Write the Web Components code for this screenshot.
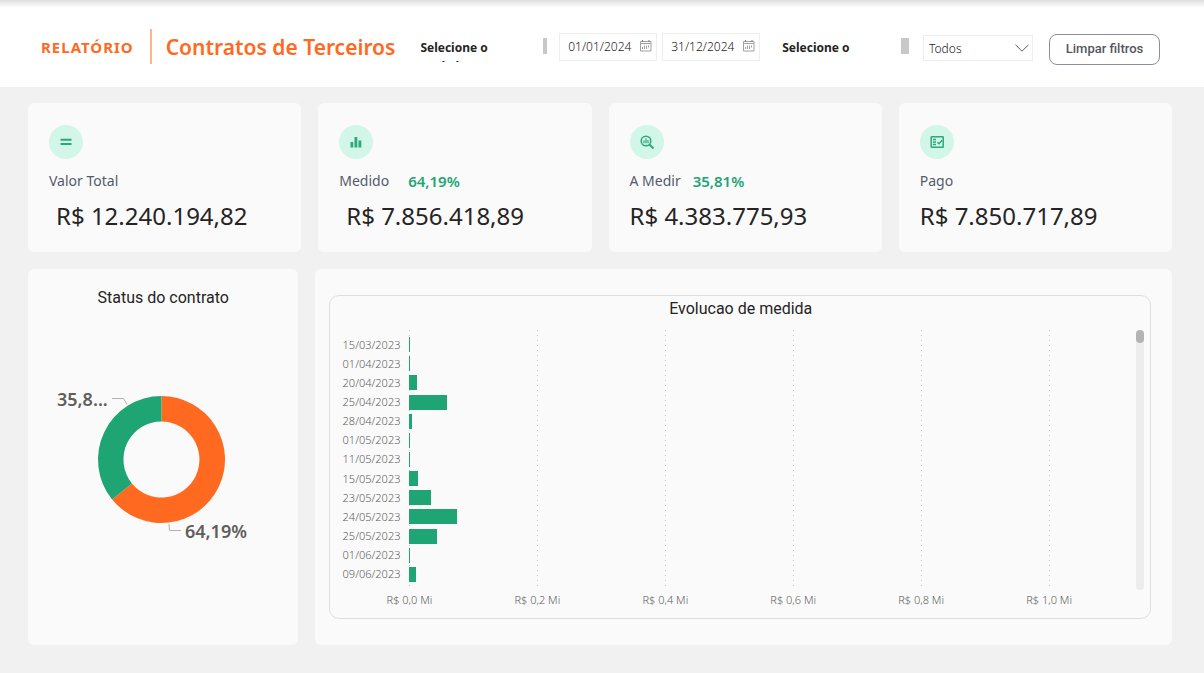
<!DOCTYPE html>
<html lang="pt-BR">
<head>
<meta charset="utf-8">
<title>Contratos de Terceiros</title>
<style>
  body { margin: 0; background: #f1f1f1; color: #252423; font-family: "Noto Sans", "Open Sans", sans-serif; }
</style>
</head>
<body>
<report-page>
  <report-header slot="header"></report-header>
  <kpi-card slot="kpi" icon="equal" label="Valor Total" roomy>R$ 12.240.194,82</kpi-card>
  <kpi-card slot="kpi" icon="bars" label="Medido" share="64,19%" roomy>R$ 7.856.418,89</kpi-card>
  <kpi-card slot="kpi" icon="inspect" label="A Medir" share="35,81%">R$ 4.383.775,93</kpi-card>
  <kpi-card slot="kpi" icon="check" label="Pago">R$ 7.850.717,89</kpi-card>
  <status-donut slot="chart">Status do contrato</status-donut>
  <measure-chart slot="chart">Evolucao de medida</measure-chart>
</report-page>

<script>
const define = (name, html, setup) => customElements.define(name, class extends HTMLElement {
  constructor() {
    super();
    const t = document.createElement('template');
    t.innerHTML = html;
    this.attachShadow({ mode: 'open' }).append(t.content.cloneNode(true));
  }
  connectedCallback() { if (setup) setup(this, this.shadowRoot); }
});

define('report-page', `
<style>
  :host { display: block; min-height: 100vh; }
  main { padding: 16px 32px 28px 28px; display: grid; gap: 17px; }
  .kpis { display: grid; grid-template-columns: repeat(4, 1fr); gap: 17px; }
  .charts { display: grid; grid-template-columns: 6fr 19fr; gap: 17px; }
</style>
<slot name="header"></slot>
<main>
  <section class="kpis"><slot name="kpi"></slot></section>
  <section class="charts"><slot name="chart"></slot></section>
</main>`);

define('scroll-label', `
<style>
  :host { display: flex; justify-content: space-between; flex: 1; height: 24px; overflow: hidden;
    font-size: 12px; line-height: 19px; font-weight: 700; }
  .text { width: 80px; }
  .thumb { width: var(--thumb, 4px); height: 16px; background: #c8c8c8; }
</style>
<span class="text"><slot></slot></span><span class="thumb"></span>`);

define('report-header', `
<style>
  :host { display: flex; align-items: center; height: 87px; padding: 0 44px 0 41px; box-sizing: border-box;
    background: linear-gradient(#dedede, #fff 8px); }
  .brand { font-size: 15px; line-height: 20px; font-weight: 700; color: #ff6a20; letter-spacing: 1px; padding-top: 6px; }
  .rule { width: 2px; height: 35px; margin: 6px 14px 0 16px; background: #ffb58f; }
  h1 { margin: 0; font-size: 21px; line-height: 30px; font-weight: 600; color: #ff6a20; white-space: nowrap; padding-top: 6px; }
  form { flex: 1; display: flex; align-items: center; margin-left: 25px; }
  label { flex: 1; display: flex; margin-top: 12px; }
  .second { --thumb: 8px; margin-left: 22px; }
  .date { display: flex; align-items: center; width: 98px; height: 28px; box-sizing: border-box; border: 1px solid #eee; margin-top: 6px; }
  .date + .date { margin-left: 5px; }
  .first + .date { margin-left: 12px; }
  .date svg { margin: 0 4px 2px 0; flex: none; }
  input { flex: 1; min-width: 0; border: 0; padding: 0 0 0 8px; background: none; font: 300 12px/18px "Noto Sans", sans-serif; color: #252423; outline: 0; }
  .pick { display: grid; width: 110px; height: 26px; margin: 9px 16px 0 14px; }
  .pick > * { grid-area: 1 / 1; }
  select { appearance: none; border: 1px solid #eee; border-radius: 0; background: #fff; padding: 2px 0 0 5px;
    font: 300 12px/18px "Noto Sans", sans-serif; color: #252423; }
  .pick svg { justify-self: end; align-self: center; margin-right: 4px; pointer-events: none; }
  button { width: 111px; height: 31px; margin-top: 11px; padding: 0; border: 1px solid #8d8f96; border-radius: 8px; background: #fff;
    font: 500 13px/18px Roboto, sans-serif; color: #54565f; }
</style>
<span class="brand">RELATÓRIO</span><span class="rule"></span>
<h1>Contratos de Terceiros</h1>
<form>
  <label class="first" for="from"><scroll-label>Selecione o período</scroll-label></label>
  <span class="date"><input id="from" value="01/01/2024"><svg class="cal" width="12" height="12"></svg></span>
  <span class="date"><input id="to" aria-label="Data final" value="31/12/2024"><svg class="cal" width="12" height="12"></svg></span>
  <label class="second" for="pick"><scroll-label>Selecione o</scroll-label></label>
  <span class="pick"><select id="pick"><option>Todos</option></select>
    <svg width="14" height="8" viewBox="0 0 14 8" fill="none" stroke="#605e5c"><path d="M.5 .8 7 7.2 13.5 .8"/></svg></span>
  <button type="button">Limpar filtros</button>
</form>`, (host, root) => {
  for (const svg of root.querySelectorAll('.cal'))
    svg.innerHTML = '<path d="M.5 1.5h10.500v9.500H.5z" fill="none" stroke="#a3a19f"/><path d="M.5 3.500h10.500" stroke="#a3a19f"/><path d="M2.500 0v2M9 0v2" stroke="#777"/><path d="M2.500 7v2M4.500 5.500v3.500M6.500 5.500v3.500M8.500 5.500v2" stroke="#a3a19f"/>';
});

const icons = {
  equal: '<path d="M6.500 9.800h11M6.500 14h11" fill="none" stroke="#2ba97b" stroke-width="2"/>',
  bars: '<path d="M6.500 12h2.800v5.500H6.500zM10.500 7h2.800v10.500h-2.800zM14.500 10.500h2.800v7h-2.800z" fill="#2ba97b"/>',
  inspect: '<g fill="none" stroke="#2ba97b" stroke-width="1.500"><circle cx="11" cy="11" r="4.800"/><path d="M14.500 14.500 18.500 18.500" stroke-width="2"/><path d="M9 10.500v2.800M11 8.500v4.800M13 10v3.300" stroke-width="1.200"/></g>',
  check: '<g fill="none" stroke="#2ba97b" stroke-width="1.500"><rect x="6.200" y="6.700" width="12" height="10.600" rx=".6"/><path d="M8 9.500h3M8 12h3M8 14.500h3M12.500 12.200l1.500 1.500 3.200-3.400"/></g>'
};

define('kpi-card', `
<style>
  :host { display: block; height: 149px; padding: 22px 21px 0; box-sizing: border-box; border-radius: 6px; background: #fafafa; }
  .disc { display: grid; place-items: center; width: 34px; height: 34px; border-radius: 50%; background: #d2f6e7; }
  .line { display: flex; gap: 12px; margin-top: 12px; font-size: 14px; line-height: 20px; }
  .name { color: #545a6b; }
  .share { font-size: 15px; font-weight: 600; color: #1fa573; }
  .value { margin-top: 9px; font-size: 24px; line-height: 32px; white-space: nowrap; }
  :host([roomy]) .line { gap: 19px; }
  :host([roomy]) .value { padding-left: 7px; }
</style>
<div class="disc"><svg width="24" height="24" viewBox="0 0 24 24"></svg></div>
<div class="line"><span class="name"></span><span class="share"></span></div>
<div class="value"><slot></slot></div>`, (host, root) => {
  root.querySelector('svg').innerHTML = icons[host.getAttribute('icon')];
  root.querySelector('.name').textContent = host.getAttribute('label');
  root.querySelector('.share').textContent = host.getAttribute('share') || '';
});

define('status-donut', `
<style>
  :host { display: flex; flex-direction: column; align-items: center; padding: 17px 0 0; border-radius: 6px; background: #fafafa; }
  h2 { margin: 0; font: 400 16px/24px Roboto, sans-serif; }
  svg { margin-top: 70px; }
  text { font: 600 18px "Noto Sans", sans-serif; fill: #605e5c; }
</style>
<h2><slot></slot></h2>
<svg width="270" height="170" viewBox="28 380 270 170" role="img" aria-label="Status do contrato">
  <g transform="translate(161.500 459.500)">
    <path fill="#ff6a20" d="M0-63.500A63.500 63.500 0 1 1-49.400 39.900L-29.600 23.900A38 38 0 1 0 0-38Z"/>
    <path fill="#1fa573" d="M0-63.500A63.500 63.500 0 0 0-49.400 39.900L-29.600 23.900A38 38 0 0 1 0-38Z"/>
  </g>
  <path d="M112 398.500h11.500l3.500 6M169 524l.5 6.500H181" fill="none" stroke="#b3b0ad"/>
  <text x="57" y="406">35,8...</text>
  <text x="185" y="538">64,19%</text>
</svg>`);

const measures = [
  ['15/03/2023', 1], ['01/04/2023', 1], ['20/04/2023', 8], ['25/04/2023', 38], ['28/04/2023', 3],
  ['01/05/2023', 1], ['11/05/2023', 1], ['15/05/2023', 9], ['23/05/2023', 22], ['24/05/2023', 48],
  ['25/05/2023', 28], ['01/06/2023', 1], ['09/06/2023', 7]
];
const ticks = ['R$ 0,0 Mi', 'R$ 0,2 Mi', 'R$ 0,4 Mi', 'R$ 0,6 Mi', 'R$ 0,8 Mi', 'R$ 1,0 Mi'];

define('measure-chart', `
<style>
  :host { display: block; padding: 26px 21px 26px 14px; border-radius: 6px; background: #fafafa; }
  .frame { border: 1px solid #dedede; border-radius: 10px; padding: 1px 6px 8px 0; }
  h2 { margin: 0 0 9px; font: 400 16px/24px Roboto, sans-serif; text-align: center; padding-left: 7px; }
  .plot { display: grid; grid-template-columns: 79px 1fr 8px; grid-template-rows: 260px 20px; font-size: 11px; color: #605e5c; }
  .lines, .axis { display: grid; grid-template-columns: repeat(5, 128fr) 87fr; }
  .lines { grid-area: 1 / 2; }
  .lines i { width: 1px; background: repeating-linear-gradient(#c8c8c8 0 1px, transparent 1px 5px); }
  .axis { grid-area: 2 / 2; line-height: 20px; }
  .axis span { width: 64px; margin-left: -32px; text-align: center; white-space: nowrap; font-weight: 300; }
  ul { grid-area: 1 / 1 / 2 / 3; list-style: none; margin: 0; padding: 5px 0 6px; display: grid; grid-template-rows: repeat(13, 1fr); }
  li { display: grid; grid-template-columns: 79px 1fr; align-items: center; line-height: 18px; }
  li span { padding-right: 9px; text-align: right; font-weight: 300; }
  li b { height: 15px; background: #1fa573; }
  .track { grid-area: 1 / 3; border-radius: 4px; background: #ededed; }
  .track i { display: block; height: 13px; border-radius: 4px; background: #b3b3b3; }
</style>
<div class="frame">
  <h2><slot></slot></h2>
  <div class="plot"><div class="lines"></div><ul></ul><div class="track"><i></i></div><div class="axis"></div></div>
</div>`, (host, root) => {
  root.querySelector('.lines').innerHTML = ticks.map(() => '<i></i>').join('');
  root.querySelector('.axis').innerHTML = ticks.map(t => `<span>${t}</span>`).join('');
  root.querySelector('ul').innerHTML = measures.map(([d, v]) =>
    `<li><span>${d}</span><b style="width:${(v / 727 * 100).toFixed(2)}%"></b></li>`).join('');
});
</script>
</body>
</html>
